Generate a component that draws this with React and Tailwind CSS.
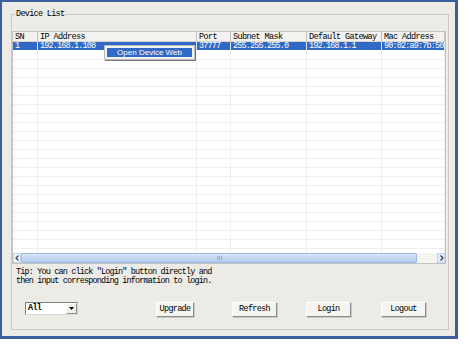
import React from "react";

const mono = "font-['Liberation_Mono','DejaVu_Sans_Mono',monospace] text-[8.5px] leading-[9px] text-black";

const columns = [
  { name: "SN", width: "w-[25px]" },
  { name: "IP Address", width: "w-[159px]" },
  { name: "Port", width: "w-[34px]" },
  { name: "Subnet Mask", width: "w-[76px]" },
  { name: "Default Gateway", width: "w-[75px]" },
  { name: "Mac Address", width: "w-[63px]" },
];

const device = ["1", "192.168.1.108", "37777", "255.255.255.0", "192.168.1.1", "90:02:a9:7b:50"];

const Button = ({ label, className }) => (
  <button
    type="button"
    className={`h-[15px] border border-t-white border-l-white border-r-[#8d8d8d] border-b-[#8d8d8d] bg-[#f5f4f1] shadow-[1px_1px_0_#c8c8c8] ${mono} tracking-[-0.7px] ${className}`}
  >
    {label}
  </button>
);

const App = () => {
  const rows = Array.from({ length: 24 });

  return (
    <div className="w-[469px] h-[346px] bg-white">
      <div className="w-[458px] h-[339px] bg-[#ecebe6] border-t-2 border-l-2 border-r-[3px] border-b-[3px] border-[#3b5f9c]">
        <fieldset className="ml-[9px] mt-[7px] w-[438px] h-[321px] border border-[#c9c8c2] pl-0 pr-[2px]">
          <legend className={`ml-[3px] px-[1px] ${mono} leading-[10px] tracking-[-0.7px]`}>
            Device List
          </legend>

          {/* list view */}
          <div className="relative mt-[12px] w-[434px] border border-[#c2c2c2] bg-white">
            <div className="flex h-[10px] bg-[#f3f2ee] border-b border-[#d6d4cc]">
              {columns.map((c) => (
                <div
                  key={c.name}
                  className={`${c.width} shrink-0 overflow-hidden whitespace-nowrap border-r border-[#c4c2b8] pl-[2px] ${mono} leading-[10px] tracking-[-0.6px]`}
                >
                  {c.name}
                </div>
              ))}
            </div>

            <div className="h-[211px] overflow-hidden">
              {rows.map((_, i) => (
                <div key={i} className="flex h-[9px]">
                  {columns.map((c, j) => (
                    <div
                      key={c.name}
                      className={`${c.width} shrink-0 overflow-hidden whitespace-nowrap border-r border-b ${
                        i === 0
                          ? `bg-[#3169c6] border-r-[#dfe6f3] border-b-white pl-[2px] ${mono} tracking-[-0.85px] text-white`
                          : "border-[#eeeeee]"
                      }`}
                    >
                      {i === 0 ? <span className="text-white">{device[j]}</span> : null}
                    </div>
                  ))}
                </div>
              ))}
            </div>

            {/* horizontal scroll bar */}
            <div className="flex h-[10px] bg-[#f7f7f5]">
              <div className="w-[8px] flex items-center justify-center border border-[#c5d4ec] bg-[#f4f7fc]">
                <svg width="5" height="6" viewBox="0 0 5 6">
                  <path d="M3.5 0.5 L1 3 L3.5 5.5" fill="none" stroke="#2d3e5c" strokeWidth="1.2" />
                </svg>
              </div>
              <div className="w-[396px] flex items-center justify-center border border-[#9fb9e2] rounded-[1px] bg-gradient-to-b from-[#d8e6f8] to-[#b3cdef]">
                <div className="flex gap-[1px]">
                  <span className="w-[1px] h-[4px] bg-[#8aa6d3]" />
                  <span className="w-[1px] h-[4px] bg-[#8aa6d3]" />
                  <span className="w-[1px] h-[4px] bg-[#8aa6d3]" />
                </div>
              </div>
              <div className="w-[20px] bg-[#f5f5f2]" />
              <div className="w-[8px] flex items-center justify-center border border-[#c5d4ec] bg-[#e4ecf8]">
                <svg width="5" height="6" viewBox="0 0 5 6">
                  <path d="M1.5 0.5 L4 3 L1.5 5.5" fill="none" stroke="#2d3e5c" strokeWidth="1.2" />
                </svg>
              </div>
            </div>

            {/* context menu */}
            <div className="absolute left-[91px] top-[13px] w-[91px] h-[15px] bg-[#f3f3f3] border border-[#b9b9b9] shadow-[1px_1px_0_#7a7a7a] p-[2px]">
              <div className="h-full bg-[#3169c6] flex items-center justify-center font-['Liberation_Sans',Arial,sans-serif] text-[8px] text-white">
                Open Device Web
              </div>
            </div>
          </div>

          <p className={`mt-[4px] pl-[4px] ${mono} tracking-[-0.85px]`}>
            Tip: You can click "Login" button directly and
            <br />
            then input corresponding information to login.
          </p>

          <div className="mt-[16px] flex items-start">
            <div className="ml-[13px] w-[53px] h-[13px] flex border border-[#7f7f7f] border-r-[#d8d8d8] border-b-[#d8d8d8] bg-white">
              <span className={`flex-1 pl-[2px] ${mono} leading-[11px] tracking-[-0.7px] font-bold`}>All</span>
              <div className="w-[11px] flex items-center justify-center bg-[#f1f0ec] border border-t-white border-l-white border-r-[#8d8d8d] border-b-[#8d8d8d]">
                <svg width="5" height="3" viewBox="0 0 5 3">
                  <path d="M0 0 H5 L2.5 3 Z" fill="#000" />
                </svg>
              </div>
            </div>
            <Button label="Upgrade" className="ml-[78px] w-[38px]" />
            <Button label="Refresh" className="ml-[38px] w-[45px]" />
            <Button label="Login" className="ml-[29px] w-[45px]" />
            <Button label="Logout" className="ml-[30px] w-[45px]" />
          </div>
        </fieldset>
      </div>
    </div>
  );
};

export default App;
